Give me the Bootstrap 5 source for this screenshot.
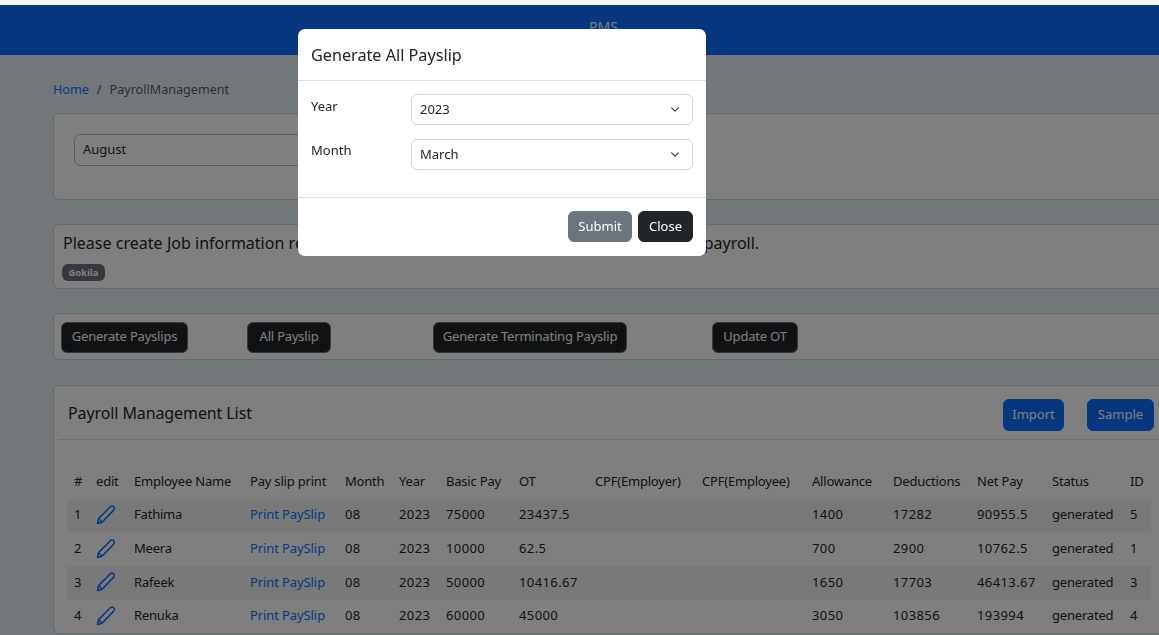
<!DOCTYPE html>
<html lang="en">
<head>
    <meta charset="UTF-8">
    <title>Payroll Management</title>
    <link href="https://cdn.jsdelivr.net/npm/bootstrap@5.3.0/dist/css/bootstrap.min.css" rel="stylesheet">
    <style>
        html, body { height: 100%; overflow: hidden; }
        body { background: #e6f0f5; font-family: "Noto Sans", "Liberation Sans", sans-serif; font-size: 13px; color: #212529; }

        .top-strip { height: 5px; background: #f3f4f6; }
        .top-bar { height: 50px; background: #0d6efd; color: rgba(255, 255, 255, .95); }
        .top-bar span { margin-left: 589px; padding-top: 11px; font-size: 14px; display: block; }

        .page-wrap { width: 1200px; padding: 26px 0 0 53px; }
        .page-wrap .breadcrumb { font-size: 12.6px; margin-bottom: 15px; height: 17px; line-height: 17px; }
        .page-wrap .breadcrumb a { text-decoration: none; }
        .page-wrap .card { border-radius: 6px; }

        .month-card { height: 87px; padding: 20px; margin-bottom: 24px; }
        .month-card .form-select { width: 330px; height: 32px; font-size: 13px; padding: 4px 8px; border-color: #bbb; }

        .notice-card { height: 65px; padding: 8px 9px; margin-bottom: 24px; }
        .notice-card p { font-size: 16px; line-height: 20px; margin-bottom: 9px; word-spacing: .15px; }
        .notice-card .badge { font-size: 9.5px; padding: 4px 6px; width: 43px; height: 17px; margin-left: -1px; }

        .action-card { height: 47px; padding: 8px 7px; margin-bottom: 25px; }
        .action-card .btn { height: 31px; font-size: 13px; padding: 0 0 1px; border-color: #6c757d; letter-spacing: -.2px; }
        .btn-gen { width: 127px; margin-right: 59px; }
        .btn-all { width: 84px; margin-right: 102px; }
        .btn-term { width: 194px; margin-right: 85px; }
        .btn-ot { width: 86px; }

        .list-head { height: 54px; margin: 0 4px; padding: 3px 10px 0; border-bottom: 1px solid #dcdcdc; }
        .list-head h5 { font-size: 16px; margin: 0; font-weight: 400; letter-spacing: -.1px; }
        .list-head .btn { height: 32px; font-size: 13px; padding: 0; margin-top: 2px; }
        .btn-import { width: 61px; margin-right: 23px; }
        .btn-sample { width: 67px; margin-right: 31px; }

        .pay-table { width: 1084px; margin: 25px 0 0 13px; table-layout: fixed; font-size: 13px; letter-spacing: -.2px; }
        .pay-table th, .pay-table td { padding: 0 7px; height: 33.7px; font-weight: 400; white-space: nowrap; border: 0; vertical-align: middle; background: transparent; }
        .pay-table td { padding-bottom: 1px; }
        .pay-table tbody tr:nth-child(odd) td { background: rgba(0, 0, 0, .05); }
        .pay-table a { text-decoration: none; letter-spacing: -.1px; }
        .pay-table svg { display: block; }
        .pay-table td:nth-child(1), .pay-table td:nth-child(n+5):nth-child(-n+8), .pay-table td:nth-child(n+11):nth-child(-n+13), .pay-table td:nth-child(15) { letter-spacing: .4px; }

        .pay-table col:nth-child(1) { width: 22px; }
        .pay-table col:nth-child(2) { width: 38px; }
        .pay-table col:nth-child(3) { width: 116px; }
        .pay-table col:nth-child(4) { width: 95px; }
        .pay-table col:nth-child(5) { width: 54px; }
        .pay-table col:nth-child(6) { width: 47px; }
        .pay-table col:nth-child(7) { width: 73px; }
        .pay-table col:nth-child(8) { width: 76px; }
        .pay-table col:nth-child(9) { width: 107px; }
        .pay-table col:nth-child(10) { width: 110px; }
        .pay-table col:nth-child(11) { width: 81px; }
        .pay-table col:nth-child(12) { width: 84px; }
        .pay-table col:nth-child(13) { width: 75px; }
        .pay-table col:nth-child(14) { width: 78px; }
        .pay-table col:nth-child(15) { width: 28px; }

        .shade { top: 5px; }
        .payslip-dialog.modal-dialog { width: 408px; max-width: 408px; margin: 29px 0 0 298px; }
        .payslip-dialog .modal-content { height: 227px; border: 0; border-radius: 7px; }
        .payslip-dialog .modal-header { height: 52px; padding: 0 13px; }
        .payslip-dialog .modal-title { font-size: 16.2px; line-height: 20px; font-weight: 400; }
        .payslip-dialog .modal-body { padding: 13px; flex: 1 1 auto; }
        .payslip-dialog .modal-footer { height: 59px; padding: 0 13px 2px; gap: 6px; }
        .payslip-dialog .modal-footer .btn { height: 31px; font-size: 13px; padding: 1px 0 0; margin: 0; }
        .btn-submit { width: 64px; }
        .btn-close-modal { width: 55px; }
        .field-row { display: flex; margin-bottom: 14px; }
        .field-row label { width: 100px; flex: none; padding-top: 4px; line-height: 17px; }
        .field-row:last-child label { padding-top: 3px; }
        .field-row .form-select { width: 282px; height: 31px; font-size: 13px; padding: 4px 8px; border-color: #ced4da; background-size: 12px 9px; background-position: right 11px center; }
    </style>
</head>
<body>
<div class="top-strip"></div>
<div class="top-bar"><span>PMS</span></div>

<div class="page-wrap">
    <nav aria-label="breadcrumb">
        <ol class="breadcrumb">
            <li class="breadcrumb-item"><a href="#">Home</a></li>
            <li class="breadcrumb-item active">PayrollManagement</li>
        </ol>
    </nav>

    <div class="card month-card">
        <select class="form-select"><option>August</option></select>
    </div>

    <div class="card notice-card">
        <p>Please create Job information records for the employees listed below before creating payroll.</p>
        <div><span class="badge bg-secondary">Gokila</span></div>
    </div>

    <div class="card action-card d-block">
        <button class="btn btn-dark btn-gen">Generate Payslips</button><button class="btn btn-dark btn-all">All Payslip</button><button class="btn btn-dark btn-term">Generate Terminating Payslip</button><button class="btn btn-dark btn-ot">Update OT</button>
    </div>

    <div class="card">
        <div class="list-head d-flex align-items-center justify-content-between">
            <h5>Payroll Management List</h5>
            <div>
                <button class="btn btn-primary btn-import">Import</button><button class="btn btn-primary btn-sample">Sample</button>
            </div>
        </div>
        <table class="table pay-table">
            <colgroup>
                <col><col><col><col><col><col><col><col><col><col><col><col><col><col><col>
            </colgroup>
            <thead>
                <tr>
                    <th>#</th><th>edit</th><th>Employee Name</th><th>Pay slip print</th><th>Month</th><th>Year</th><th>Basic Pay</th><th>OT</th><th>CPF(Employer)</th><th>CPF(Employee)</th><th>Allowance</th><th>Deductions</th><th>Net Pay</th><th>Status</th><th>ID</th>
                </tr>
            </thead>
            <tbody id="payRows"></tbody>
        </table>
    </div>
</div>

<div class="modal-backdrop show shade"></div>
<div class="modal d-block" tabindex="-1">
    <div class="modal-dialog payslip-dialog">
        <div class="modal-content">
            <div class="modal-header">
                <h5 class="modal-title">Generate All Payslip</h5>
            </div>
            <div class="modal-body">
                <div class="field-row">
                    <label>Year</label>
                    <select class="form-select"><option>2023</option></select>
                </div>
                <div class="field-row">
                    <label>Month</label>
                    <select class="form-select"><option>March</option></select>
                </div>
            </div>
            <div class="modal-footer">
                <button class="btn btn-secondary btn-submit">Submit</button>
                <button class="btn btn-dark btn-close-modal">Close</button>
            </div>
        </div>
    </div>
</div>

<script src="https://cdn.jsdelivr.net/npm/bootstrap@5.3.0/dist/js/bootstrap.bundle.min.js"></script>
<script>
    const rows = [
        ["Fathima", "75000", "23437.5", "1400", "17282", "90955.5", 5],
        ["Meera", "10000", "62.5", "700", "2900", "10762.5", 1],
        ["Rafeek", "50000", "10416.67", "1650", "17703", "46413.67", 3],
        ["Renuka", "60000", "45000", "3050", "103856", "193994", 4]
    ];
    const pencil = `<svg width="20" height="20" viewBox="0 0 20 20" fill="none" stroke="#0d6efd" stroke-width="1.5" stroke-linejoin="round"><path d="M1.5 18.5 2.6 13.6 13.8 2.2C15 1 16.6 .8 17.6 1.7 18.6 2.7 18.4 4.4 17.2 5.6L6 17.2Z"/><path d="M2.6 13.6 6 17.2"/></svg>`;
    document.getElementById("payRows").innerHTML = rows.map((r, i) => `
        <tr>
            <td>${i + 1}</td><td>${pencil}</td><td>${r[0]}</td><td><a href="#">Print PaySlip</a></td>
            <td>08</td><td>2023</td><td>${r[1]}</td><td>${r[2]}</td><td></td><td></td>
            <td>${r[3]}</td><td>${r[4]}</td><td>${r[5]}</td><td>generated</td><td>${r[6]}</td>
        </tr>`).join("");
</script>
</body>
</html>
